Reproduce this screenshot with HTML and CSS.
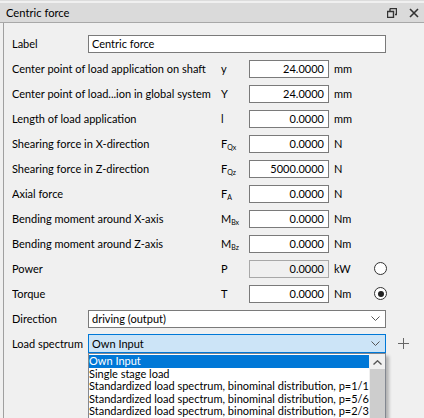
FILE: index.html
```html
<!DOCTYPE html>
<html>
<head>
<meta charset="utf-8">
<link rel="stylesheet" href="styles.css">
</head>
<body>
<div class="window">
  <div class="titlebar">
    <span class="title">Centric force</span>
    <span class="tb-icons">
      <svg class="ico-restore" width="10" height="10" viewBox="0 0 10 10"><path d="M3 0.5H9.5V6.5H8M0.5 3.5H6.5V9.5H0.5Z M3 0.5V3.5 M0.5 3.5 H6.5" fill="none" stroke="#333" stroke-width="1.4"/></svg>
      <svg class="ico-close" width="10" height="10" viewBox="0 0 10 10"><path d="M1 1L9 9M9 1L1 9" stroke="#333" stroke-width="1.6"/></svg>
    </span>
  </div>
  <div class="panel">
    <div class="row">
      <span class="lbl-short">Label</span>
      <span class="field wide">Centric force</span>
    </div>
    <div class="row"><span class="lbl">Center point of load application on shaft</span><span class="sym">y</span><span class="field num">24.0000</span><span class="unit">mm</span></div>
    <div class="row"><span class="lbl">Center point of load...ion in global system</span><span class="sym">Y</span><span class="field num">24.0000</span><span class="unit">mm</span></div>
    <div class="row"><span class="lbl">Length of load application</span><span class="sym">l</span><span class="field num">0.0000</span><span class="unit">mm</span></div>
    <div class="row"><span class="lbl">Shearing force in X-direction</span><span class="sym">F<sub>Qx</sub></span><span class="field num">0.0000</span><span class="unit">N</span></div>
    <div class="row"><span class="lbl">Shearing force in Z-direction</span><span class="sym">F<sub>Qz</sub></span><span class="field num">5000.0000</span><span class="unit">N</span></div>
    <div class="row"><span class="lbl">Axial force</span><span class="sym">F<sub>A</sub></span><span class="field num">0.0000</span><span class="unit">N</span></div>
    <div class="row"><span class="lbl">Bending moment around X-axis</span><span class="sym">M<sub>Bx</sub></span><span class="field num">0.0000</span><span class="unit">Nm</span></div>
    <div class="row"><span class="lbl">Bending moment around Z-axis</span><span class="sym">M<sub>Bz</sub></span><span class="field num">0.0000</span><span class="unit">Nm</span></div>
    <div class="row"><span class="lbl">Power</span><span class="sym">P</span><span class="field num disabled">0.0000</span><span class="unit">kW</span><span class="radio"></span></div>
    <div class="row"><span class="lbl">Torque</span><span class="sym">T</span><span class="field num">0.0000</span><span class="unit">Nm</span><span class="radio on"></span></div>
    <div class="row">
      <span class="lbl-short">Direction</span>
      <span class="field wide combo">driving (output)<svg class="chev" width="9" height="5" viewBox="0 0 9 5"><path d="M0.5 0.5L4.5 4.5L8.5 0.5" fill="none" stroke="#555" stroke-width="1"/></svg></span>
    </div>
    <div class="row spec">
      <span class="lbl-short">Load spectrum</span>
      <span class="field wide combo open">Own Input<svg class="chev" width="9" height="5" viewBox="0 0 9 5"><path d="M0.5 0.5L4.5 4.5L8.5 0.5" fill="none" stroke="#555" stroke-width="1"/></svg></span>
      <svg class="plus" width="11" height="11" viewBox="0 0 11 11"><path d="M5.5 0V11M0 5.5H11" stroke="#666" stroke-width="1"/></svg>
      <div class="dropdown">
        <div class="items">
          <div class="item sel">Own Input</div>
          <div class="item">Single stage load</div>
          <div class="item">Standardized load spectrum, binominal distribution, p=1/1</div>
          <div class="item">Standardized load spectrum, binominal distribution, p=5/6</div>
          <div class="item">Standardized load spectrum, binominal distribution, p=2/3</div>
        </div>
        <div class="scroll">
          <svg class="up" width="9" height="5" viewBox="0 0 9 5"><path d="M0.5 4.5L4.5 0.8L8.5 4.5" fill="none" stroke="#555" stroke-width="1.4"/></svg>
          <div class="thumb"></div>
        </div>
      </div>
    </div>
  </div>
</div>
</body>
</html>
```
FILE: styles.css
```css
html, body {
  margin: 0;
  padding: 0;
  background: #f0f0f0;
  font-family: Lato, "Noto Sans", sans-serif;
  font-size: 11px;
  color: #000;
}
.window {
  width: 424px;
  height: 418px;
  overflow: hidden;
  border-top: 1px solid #dcdcdc;
  box-sizing: border-box;
  padding-top: 2px;
}
.titlebar {
  height: 19px;
  background: #dadada;
  border-bottom: 1px solid #a8a8a8;
  display: flex;
  align-items: center;
  justify-content: space-between;
  padding: 0 6px;
  font-size: 11.2px;
}
.title { color: #000; }
.tb-icons {
  display: flex;
  align-items: center;
  gap: 12px;
  margin-right: -1px;
}
.panel {
  margin-left: 3px;
  border-left: 1px solid #a0a0a0;
  padding: 8px 0 0 8px;
  height: 400px;
  position: relative;
}
.row {
  height: 25px;
  display: flex;
  align-items: center;
  position: relative;
  white-space: nowrap;
}
.lbl-short { width: 76px; flex: none; }
.lbl { width: 209px; flex: none; overflow: hidden; }
.sym { width: 28px; flex: none; }
.sym sub {
  font-size: 7px;
  vertical-align: baseline;
  position: relative;
  top: 2px;
}
.field {
  height: 18px;
  box-sizing: border-box;
  border: 1px solid #7a7a7a;
  background: #fff;
  display: flex;
  align-items: center;
  padding: 0 3px;
  flex: none;
}
.field.wide { width: 298px; }
.field.num {
  width: 80px;
  justify-content: flex-end;
  padding-right: 4px;
}
.field.disabled {
  background: #f0f0f0;
  border-color: #a8a8a8;
}
.unit { width: 40px; flex: none; padding-left: 5px; }
.radio {
  width: 11px;
  height: 11px;
  border: 1px solid #333;
  border-radius: 50%;
  background: #fff;
  flex: none;
  position: relative;
}
.radio.on::after {
  content: "";
  position: absolute;
  left: 2.5px;
  top: 2.5px;
  width: 6px;
  height: 6px;
  border-radius: 50%;
  background: #222;
}
.combo {
  justify-content: space-between;
  padding-right: 5px;
}
.combo.open {
  background: #cce4f7;
  border-color: #0078d7;
  height: 19px;
}
.chev { flex: none; }
.plus { margin-left: 12px; flex: none; }
.dropdown {
  position: absolute;
  left: 76px;
  top: 22px;
  width: 298px;
  height: 80px;
  background: #fff;
  border: 1px solid #828790;
  box-sizing: border-box;
  box-shadow: 3px 3px 3px rgba(0,0,0,0.25);
  display: flex;
  font-size: 11px;
}
.items { flex: 1; overflow: hidden; }
.item {
  height: 12.5px;
  line-height: 12.5px;
  white-space: nowrap;
}
.item.sel { background: #0078d7; color: #fff; margin-top: 1px; }
.scroll {
  width: 16px;
  flex: none;
  background: #f0f0f0;
  display: flex;
  flex-direction: column;
  align-items: center;
}
.scroll .up { margin-top: 6px; }
.thumb {
  margin-top: 4px;
  width: 15px;
  flex: 1;
  background: #cdcdcd;
}
```
